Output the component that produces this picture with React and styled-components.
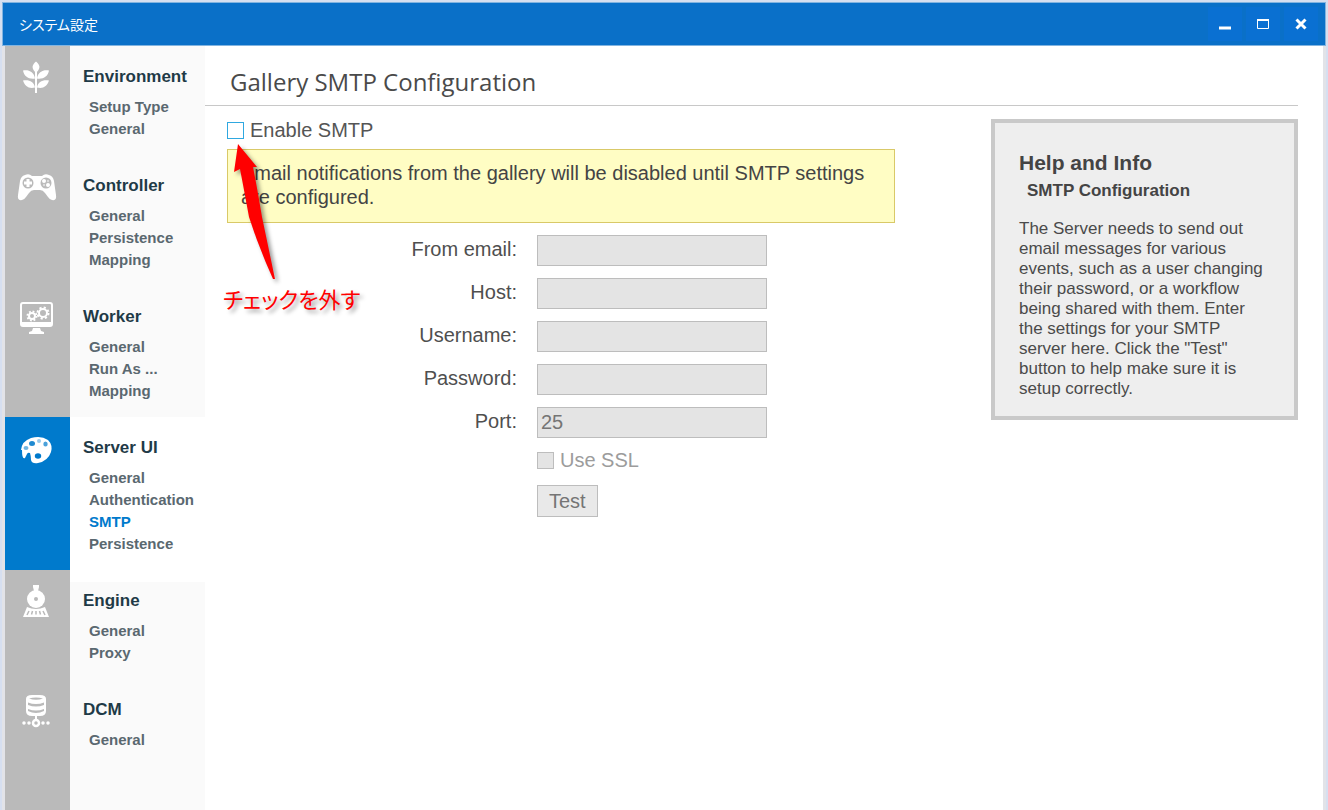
import React from "react";
import styled, { createGlobalStyle } from "styled-components";

const GlobalStyle = createGlobalStyle`
  * {
    box-sizing: border-box;
  }

  body {
    margin: 0;
    background: #d6dff0;
    color: #4a4a4a;
    font-family: "Liberation Sans", "Noto Sans CJK JP", sans-serif;
    font-size: 20px;
  }
`;

const Window = styled.div`
  display: flex;
  flex-direction: column;
  min-height: 100vh;
  padding: 2px 2px 0;
`;

const TitleBar = styled.header`
  display: flex;
  align-items: center;
  justify-content: space-between;
  height: 44px;
  padding: 0 7px 0 16px;
  background: #0a70c8;
  border: 1px solid #82b4e0;
`;

const WindowTitle = styled.span`
  color: #fff;
  font-family: "Noto Sans CJK JP", sans-serif;
  font-size: 14px;
  font-feature-settings: "palt";
`;

const WindowButtons = styled.div`
  display: flex;
  gap: 4px;
`;

const WindowButton = styled.button`
  display: flex;
  align-items: center;
  justify-content: center;
  width: 34px;
  height: 34px;
  padding: 0;
  border: 0;
  background: #0a70d2;
  color: #fff;
`;

const Body = styled.div`
  display: flex;
  flex: 1;
  background: #fff;
  border: solid #e2e3e8;
  border-width: 0 3px;
`;

const Sidebar = styled.nav`
  display: flex;
  flex-direction: column;
  width: 200px;
  flex-shrink: 0;
`;

const Group = styled.section`
  display: flex;
  flex-grow: ${(props) => (props.$last ? 1 : 0)};
`;

const IconCell = styled.div`
  width: 65px;
  padding: 15px 0 0 12px;
  background: ${(props) => (props.$active ? "#007acc" : "#bababa")};
  color: #fff;

  svg {
    display: block;
  }
`;

const Menu = styled.div`
  flex: 1;
  padding: ${(props) => (props.$afterActive ? "7px" : "19px")} 0 15px 13px;
  border-top: ${(props) => (props.$afterActive ? "12px solid #fff" : "0")};
  background: ${(props) => (props.$active ? "#fff" : "#fafafa")};
`;

const MenuTitle = styled.h2`
  margin: 0 0 7px;
  color: #1f3a47;
  font-size: 17px;
  line-height: 24px;
`;

const MenuList = styled.ul`
  margin: 0;
  padding: 0 0 0 6px;
  list-style: none;
`;

const MenuItem = styled.li`
  height: 22px;
  line-height: 22px;
  font-size: 15px;
  font-weight: bold;
`;

const MenuLink = styled.a`
  color: ${(props) => (props.$current ? "#007acc" : "#5a6870")};
  text-decoration: none;
`;

const Main = styled.main`
  flex: 1;
  padding-right: 25px;
`;

const PageTitle = styled.h1`
  height: 60px;
  margin: 0;
  padding: 19px 0 0 25px;
  border-bottom: 1px solid #c8c8c8;
  color: #4a4a4a;
  font-family: "Open Sans", sans-serif;
  font-size: 24px;
  font-weight: normal;
  line-height: 34px;
`;

const Columns = styled.div`
  display: flex;
  align-items: flex-start;
  gap: 96px;
  padding: 12px 0 0 22px;
`;

const Form = styled.form`
  position: relative;
  flex: 1;
`;

const CheckLabel = styled.label`
  display: flex;
  align-items: center;
  gap: 6px;
  line-height: 24px;
  color: ${(props) => (props.$disabled ? "#9c9c9c" : "#555")};
`;

const CheckBox = styled.input`
  appearance: none;
  width: 17px;
  height: 17px;
  margin: 0;
  border: 1px solid #2fa8e0;
  background: #fff;

  &:disabled {
    border-color: #bdbdbd;
    background: #e4e4e4;
  }
`;

const Notice = styled.p`
  margin: 7px 0 12px;
  padding: 11px 13px 13px;
  border: 1px solid #d9c968;
  background: #fffdc4;
  color: #444;
  line-height: 24px;
`;

const Fields = styled.div`
  display: grid;
  grid-template-columns: 290px 230px;
  gap: 12px 20px;
  align-items: center;
`;

const FieldLabel = styled.label`
  padding-bottom: 3px;
  text-align: right;
  color: #4f4f4f;
  line-height: 24px;
`;

const TextInput = styled.input`
  width: 100%;
  height: 31px;
  padding: 0 3px;
  border: 1px solid #bdbdbd;
  border-radius: 0;
  background: #e4e4e4;
  color: #757575;
  font: inherit;
`;

const Extras = styled.div`
  display: flex;
  flex-direction: column;
  align-items: flex-start;
  gap: 13px;
  padding: 10px 0 0 310px;
`;

const TestButton = styled.button`
  height: 32px;
  padding: 0 11px;
  border: 1px solid #bdbdbd;
  background: #e9e9e9;
  color: #757575;
  font: inherit;
`;

const Help = styled.aside`
  width: 307px;
  flex-shrink: 0;
  margin-top: 1px;
  padding: 28px 27px 17px 24px;
  border: 4px solid #c9c9c9;
  background: #eee;
`;

const HelpTitle = styled.h2`
  margin: 0;
  color: #444;
  font-size: 21px;
  line-height: 24px;
`;

const HelpSubtitle = styled.h3`
  margin: 4px 0 16px;
  padding-left: 8px;
  color: #444;
  font-size: 17px;
  line-height: 24px;
`;

const HelpText = styled.p`
  margin: 0;
  font-size: 17px;
  line-height: 20px;
`;

const Callout = styled.div`
  position: absolute;
  top: 25px;
  left: -4px;
  pointer-events: none;

  svg {
    display: block;
    filter: drop-shadow(3px 3px 2px rgba(0, 0, 0, 0.4));
  }
`;

const CalloutText = styled.div`
  color: #f00;
  font-family: "Noto Sans CJK JP", sans-serif;
  font-size: 22px;
  font-feature-settings: "palt";
  line-height: 34px;
  white-space: nowrap;
  text-shadow: 3px 3px 4px rgba(0, 0, 0, 0.4);
`;

const PlantIcon = () => (
  <svg width="40" height="34" viewBox="-3 0 40 34" fill="currentColor">
    <path d="M16 .5c4 3.500 4.500 6 1.500 10h-3c-3-4-2.500-6.500 1.500-10z" />
    <path d="M3 9.500c6-1 11 1.500 12 8-6 1-11-2-12-8zM29 9.500c-6-1-11 1.500-12 8 6 1 11-2 12-8z" />
    <path d="M3 19.500c6-1 11 1 12 7-6 1.500-10-1-12-7zM29 19.500c-6-1-11 1-12 7 6 1.500 10-1 12-7z" />
    <path d="M15 8h2v24h-2z" />
  </svg>
);

const GamepadIcon = () => (
  <svg width="40" height="34" viewBox="1 0 40 34">
    <path
      fill="currentColor"
      d="M9 5q4-2 7 1h10q3-3 7-1 4 1 5 6l2 14q1 6-4 5-2 0-4-3l-3-4q-2-3-5-3h-6q-3 0-5 3l-3 4q-2 3-4 3-5 1-4-5l2-14q1-5 5-6z"
    />
    <circle cx="12" cy="13" r="5.500" fill="#bababa" />
    <circle cx="30" cy="13" r="5.500" fill="#bababa" />
    <path d="M12 9v8M8 13h8" stroke="currentColor" strokeWidth="3" />
    <circle cx="28" cy="11" r="2" fill="currentColor" />
    <circle cx="32" cy="15" r="2" fill="currentColor" />
    <circle cx="32" cy="11" r="1.200" fill="#ddd" />
    <circle cx="28" cy="15" r="1.200" fill="#ddd" />
  </svg>
);

const Cog = ({ x, y, r }) => {
  const outer = r + 1.5;
  const tooth = (outer * Math.PI) / 8;

  return (
    <g transform={`translate(${x} ${y})`} fill="none" stroke="currentColor">
      <circle r={r} strokeWidth="2" />
      <circle r={outer} strokeWidth="2" strokeDasharray={`${tooth} ${tooth}`} />
    </g>
  );
};

const MonitorIcon = () => (
  <svg width="40" height="34" viewBox="-3 0 40 34">
    <rect x="1" y="2" width="31" height="23" rx="2" fill="none" stroke="currentColor" strokeWidth="2" />
    <path d="M1 21h31v4H1zM13 27h7l1 3 3 1v2H9v-2l3-1z" fill="currentColor" />
    <Cog x={12} y={15} r={3} />
    <Cog x={23} y={12} r={4} />
  </svg>
);

const PaletteIcon = () => (
  <svg width="40" height="34" viewBox="-3 0 40 34">
    <path
      fill="currentColor"
      d="M1 18Q2 9 11 6q10-3 17 2 5 5 3 12-3 9-13 11-6 1-7-3 0-4-1-7-2-1-3 1l-2 4q-3 2-3-8z"
    />
    <ellipse cx="12" cy="11.500" rx="3" ry="2.500" fill="#1f8ad1" />
    <ellipse cx="19" cy="9" rx="2" ry="2" fill="#99caeb" />
    <ellipse cx="25.500" cy="12" rx="2.200" ry="2.500" fill="#4ba1da" />
    <ellipse cx="6" cy="16" rx="2.500" ry="2" fill="#70b5e2" />
    <ellipse cx="18" cy="24" rx="3.200" ry="2.800" fill="#007acc" />
  </svg>
);

const TrainIcon = () => (
  <svg width="40" height="34" viewBox="-3 0 40 34">
    <path d="M13 0h6v2l-1 4h-4l-1-4z" fill="currentColor" />
    <circle cx="16" cy="14" r="9" fill="currentColor" />
    <circle cx="16" cy="14" r="2" fill="#bababa" />
    <path d="M7 22q9 4 18 0l4 10H3z" fill="currentColor" />
    <path
      d="M9 26l-2 4M12.500 26l-1 3.500M16 26v3.500M19.500 26l1 3.500M23 26l2 4"
      stroke="#bababa"
      strokeWidth="1.500"
    />
  </svg>
);

const DatabaseIcon = () => (
  <svg width="40" height="34" viewBox="-3 0 40 34">
    <path d="M6 5q0-4 6-4h8q6 0 6 4v12q0 5-6 5h-8q-6 0-6-5z" fill="currentColor" />
    <path d="M9 4.500q7-2 14 0-7 2.500-14 0z" fill="#bababa" />
    <path
      d="M8 8.500q8 3 16 0v2.500q-8 3-16 0zM8 15q8 3 16 0v2q-8 4-16 0z"
      fill="#bababa"
    />
    <path d="M16 22v4" stroke="currentColor" strokeWidth="2" />
    <circle cx="16" cy="29" r="3" fill="none" stroke="currentColor" strokeWidth="2.500" />
    <path
      d="M4 29h0M9 29h0M23 29h0M28 29h0"
      stroke="currentColor"
      strokeWidth="3.500"
      strokeLinecap="round"
    />
  </svg>
);

const groups = [
  { title: "Environment", icon: PlantIcon, items: ["Setup Type", "General"] },
  { title: "Controller", icon: GamepadIcon, items: ["General", "Persistence", "Mapping"] },
  { title: "Worker", icon: MonitorIcon, items: ["General", "Run As ...", "Mapping"] },
  {
    title: "Server UI",
    icon: PaletteIcon,
    items: ["General", "Authentication", "SMTP", "Persistence"],
    active: true,
  },
  { title: "Engine", icon: TrainIcon, items: ["General", "Proxy"], afterActive: true },
  { title: "DCM", icon: DatabaseIcon, items: ["General"], last: true },
];

const fields = [
  { id: "email", label: "From email:", type: "email" },
  { id: "host", label: "Host:", type: "text" },
  { id: "username", label: "Username:", type: "text" },
  { id: "password", label: "Password:", type: "password" },
  { id: "port", label: "Port:", type: "text", value: "25" },
];

const App = () => {
  return (
    <Window>
      <GlobalStyle />
      <TitleBar>
        <WindowTitle>システム設定</WindowTitle>
        <WindowButtons>
          <WindowButton aria-label="Minimize">
            <svg width="12" height="12" viewBox="0 0 12 12">
              <path d="M0 10h12" stroke="currentColor" strokeWidth="3" />
            </svg>
          </WindowButton>
          <WindowButton aria-label="Maximize">
            <svg width="12" height="12" viewBox="0 0 12 12">
              <path d="M.5 1v9.500h11V1" fill="none" stroke="currentColor" />
              <path d="M0 2h12" stroke="currentColor" strokeWidth="2" />
            </svg>
          </WindowButton>
          <WindowButton aria-label="Close">
            <svg width="12" height="12" viewBox="0 0 12 12">
              <path d="M1.500 1.500l9 9M10.500 1.500l-9 9" stroke="currentColor" strokeWidth="3" />
            </svg>
          </WindowButton>
        </WindowButtons>
      </TitleBar>
      <Body>
        <Sidebar>
          {groups.map(({ title, icon: Icon, items, active, afterActive, last }) => (
            <Group key={title} $last={last}>
              <IconCell $active={active}>
                <Icon />
              </IconCell>
              <Menu $active={active} $afterActive={afterActive}>
                <MenuTitle>{title}</MenuTitle>
                <MenuList>
                  {items.map((item) => (
                    <MenuItem key={item}>
                      <MenuLink href="#" $current={item === "SMTP"}>
                        {item}
                      </MenuLink>
                    </MenuItem>
                  ))}
                </MenuList>
              </Menu>
            </Group>
          ))}
        </Sidebar>
        <Main>
          <PageTitle>Gallery SMTP Configuration</PageTitle>
          <Columns>
            <Form>
              <CheckLabel>
                <CheckBox type="checkbox" />
                Enable SMTP
              </CheckLabel>
              <Notice>
                Email notifications from the gallery will be disabled until SMTP settings are
                configured.
              </Notice>
              <Fields>
                {fields.map(({ id, label, type, value }) => (
                  <React.Fragment key={id}>
                    <FieldLabel htmlFor={id}>{label}</FieldLabel>
                    <TextInput id={id} type={type} defaultValue={value} disabled />
                  </React.Fragment>
                ))}
              </Fields>
              <Extras>
                <CheckLabel $disabled>
                  <CheckBox type="checkbox" disabled />
                  Use SSL
                </CheckLabel>
                <TestButton type="button" disabled>
                  Test
                </TestButton>
              </Extras>
              <Callout>
                <svg width="60" height="138" viewBox="0 0 60 138">
                  <path d="M15 1l19 23-4 0q4 20 9 50l13 62h-2Q36 105 26 74q-4-22-9-48l-6 3z" fill="#f00" />
                </svg>
                <CalloutText>チェックを外す</CalloutText>
              </Callout>
            </Form>
            <Help>
              <HelpTitle>Help and Info</HelpTitle>
              <HelpSubtitle>SMTP Configuration</HelpSubtitle>
              <HelpText>
                The Server needs to send out email messages for various events, such as a user
                changing their password, or a workflow being shared with them. Enter the settings
                for your SMTP server here. Click the "Test" button to help make sure it is setup
                correctly.
              </HelpText>
            </Help>
          </Columns>
        </Main>
      </Body>
    </Window>
  );
};

export default App;
